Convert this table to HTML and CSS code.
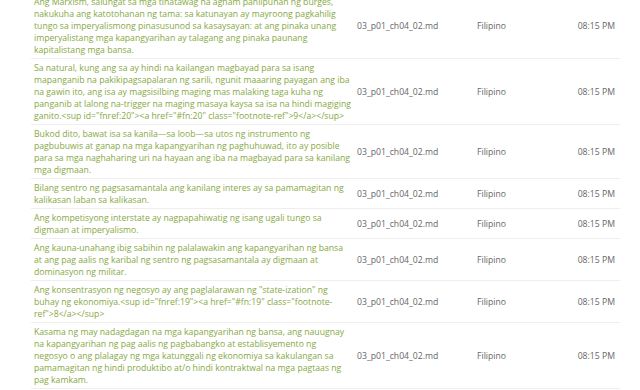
FILE: index.html
```html
<!DOCTYPE html>
<html>
<head>
<meta charset="utf-8">
<link rel="stylesheet" href="styles.css">
</head>
<body>
<div class="wrap">
<table class="list">
<colgroup><col class="c1"><col class="c2"><col class="c3"><col class="c4"></colgroup>
<tbody>
<tr><td class="src">Ang Marxism, salungat sa mga tinatawag na agham panlipunan ng burges, nakukuha ang katotohanan ng tama: sa katunayan ay mayroong pagkahilig tungo sa imperyalismong pinasusunod sa kasaysayan: at ang pinaka unang imperyalistang mga kapangyarihan ay talagang ang pinaka paunang kapitalistang mga bansa.</td><td class="file">03_p01_ch04_02.md</td><td class="lang">Filipino</td><td class="time">08:15 PM</td></tr>
<tr><td class="src">Sa natural, kung ang sa ay hindi na kailangan magbayad para sa isang mapanganib na pakikipagsapalaran ng sarili, ngunit maaaring payagan ang iba na gawin ito, ang isa ay magsisilbing maging mas malaking taga kuha ng panganib at lalong na-trigger na maging masaya kaysa sa isa na hindi magiging ganito.&lt;sup id="fnref:20"&gt;&lt;a href="#fn:20" class="footnote-ref"&gt;9&lt;/a&gt;&lt;/sup&gt;</td><td class="file">03_p01_ch04_02.md</td><td class="lang">Filipino</td><td class="time">08:15 PM</td></tr>
<tr><td class="src">Bukod dito, bawat isa sa kanila—sa loob—sa utos ng instrumento ng pagbubuwis at ganap na mga kapangyarihan ng paghuhuwad, ito ay posible para sa mga naghaharing uri na hayaan ang iba na magbayad para sa kanilang mga digmaan.</td><td class="file">03_p01_ch04_02.md</td><td class="lang">Filipino</td><td class="time">08:15 PM</td></tr>
<tr><td class="src">Bilang sentro ng pagsasamantala ang kanilang interes ay sa pamamagitan ng kalikasan laban sa kalikasan.</td><td class="file">03_p01_ch04_02.md</td><td class="lang">Filipino</td><td class="time">08:15 PM</td></tr>
<tr><td class="src">Ang kompetisyong interstate ay nagpapahiwatig ng isang ugali tungo sa digmaan at imperyalismo.</td><td class="file">03_p01_ch04_02.md</td><td class="lang">Filipino</td><td class="time">08:15 PM</td></tr>
<tr><td class="src">Ang kauna-unahang ibig sabihin ng palalawakin ang kapangyarihan ng bansa at ang pag aalis ng karibal ng sentro ng pagsasamantala ay digmaan at dominasyon ng militar.</td><td class="file">03_p01_ch04_02.md</td><td class="lang">Filipino</td><td class="time">08:15 PM</td></tr>
<tr><td class="src">Ang konsentrasyon ng negosyo ay ang paglalarawan ng "state-ization" ng buhay ng ekonomiya.&lt;sup id="fnref:19"&gt;&lt;a href="#fn:19" class="footnote-ref"&gt;8&lt;/a&gt;&lt;/sup&gt;</td><td class="file">03_p01_ch04_02.md</td><td class="lang">Filipino</td><td class="time">08:15 PM</td></tr>
<tr><td class="src">Kasama ng may nadagdagan na mga kapangyarihan ng bansa, ang nauugnay na kapangyarihan ng pag aalis ng pagbabangko at establisyemento ng negosyo o ang plalagay ng mga katunggali ng ekonomiya sa kakulangan sa pamamagitan ng hindi produktibo at/o hindi kontraktwal na mga pagtaas ng pag kamkam.</td><td class="file">03_p01_ch04_02.md</td><td class="lang">Filipino</td><td class="time">08:15 PM</td></tr>
</tbody>
</table>
</div>
</body>
</html>
```
FILE: styles.css
```css
html, body {
  margin: 0;
  padding: 0;
  background: #fff;
  overflow: hidden;
}
.wrap {
  padding-left: 31px;
  margin-top: -7px;
}
.list {
  width: 589px;
  border-collapse: collapse;
  table-layout: fixed;
  font-family: "Open Sans", "DejaVu Sans", sans-serif;
  font-size: 8.66px;
  line-height: 12px;
}
.c1 { width: 323px; }
.c2 { width: 120px; }
.c3 { width: 97px; }
.c4 { width: 49px; }
.list td {
  border-bottom: 1px solid #eeeeee;
  padding: 3px 3px 2px 3px;
  vertical-align: middle;
  color: #666;
}
.list td.src {
  color: #86a843;
  padding-right: 2px;
  word-wrap: break-word;
}
.list td.time {
  text-align: right;
  padding-right: 5px;
  white-space: nowrap;
}
```
